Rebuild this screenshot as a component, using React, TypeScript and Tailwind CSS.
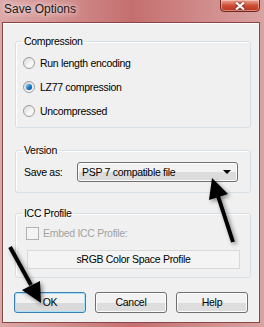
import React from 'react';

function Radio({ checked, label }: { checked?: boolean; label: string }) {
  return (
    <div className="h-[24px] flex items-center gap-[5px] pl-[7px]">
      <span className="relative w-[12px] h-[12px] rounded-full border border-[#9a9a9a] bg-gradient-to-br from-[#d6d6d6] via-[#f2f2f2] to-[#ffffff] flex items-center justify-center">
        {checked && (
          <span className="w-[6px] h-[6px] rounded-full bg-gradient-to-br from-[#9ad4f5] via-[#1f7fc7] to-[#0a4f91] shadow-[0_0_1px_#174f85]" />
        )}
      </span>
      <span className="leading-[13px]">{label}</span>
    </div>
  );
}

function Button({ label, focused }: { label: string; focused?: boolean }) {
  return (
    <div
      className={
        focused
          ? 'w-[72px] h-[21px] rounded-[3px] border border-[#3c7fb1] shadow-[inset_0_0_0_1px_#a8e2fa] bg-gradient-to-b from-[#f2f2f2] from-50% to-[#d9d9d9] to-50% flex items-center justify-center'
          : 'w-[72px] h-[21px] rounded-[3px] border border-[#707070] shadow-[inset_0_0_0_1px_#fcfcfc] bg-gradient-to-b from-[#f2f2f2] from-50% to-[#dddddd] to-50% flex items-center justify-center'
      }
    >
      <span className="leading-[13px]">{label}</span>
    </div>
  );
}

function Arrows() {
  return (
    <svg
      className="absolute inset-0 pointer-events-none drop-shadow-[2px_2px_2px_rgba(0,0,0,0.45)]"
      width="264"
      height="327"
      viewBox="0 0 264 327"
    >
      <line x1="233" y1="242" x2="218" y2="196" stroke="#000" strokeWidth="4" />
      <polygon points="212,178 228,194 209,200" fill="#000" />
      <line x1="10" y1="247" x2="31" y2="285" stroke="#000" strokeWidth="4" />
      <polygon points="41,303 40,281 22,290" fill="#000" />
    </svg>
  );
}

export default function App() {
  return (
    <div className="relative w-[264px] h-[327px] overflow-hidden bg-gradient-to-r from-[#dca8a8] via-[#c46f6f] to-[#d9a2a2] font-['Liberation_Sans',Arial,sans-serif] text-[10.5px] tracking-[-0.3px] text-black">
      {/* title bar */}
      <div className="h-[22px] flex items-start justify-between pl-[4px] pr-[4px]">
        <span className="text-[12px] tracking-normal leading-[19px] text-[#1c1c1c] [text-shadow:0_0_5px_#f6e4e4,0_0_8px_#f6e4e4]">
          Save Options
        </span>
        <div className="w-[40px] h-[13px] -mt-[1px] rounded-b-[4px] border border-[#6e2a22] bg-gradient-to-b from-[#e9a593] via-[#cf4e37] to-[#b8321f] shadow-[inset_0_0_0_1px_rgba(255,220,210,0.5)] flex items-center justify-center">
          <svg width="10" height="8" viewBox="0 0 10 8" className="drop-shadow-[0_0_1px_#5a1a12]">
            <path d="M1 0.5 L9 7.5 M9 0.5 L1 7.5" stroke="#fff" strokeWidth="2.2" />
          </svg>
        </div>
      </div>

      {/* window body */}
      <div className="ml-[2px] w-[258px] h-[301px] border border-[#8a4545] bg-[#f0f0f0] shadow-[inset_1px_1px_0_#ffffff] flex flex-col pl-[12px] pt-[12px]">
        <fieldset className="w-[236px] border border-[#d5dfe5] rounded-[3px] shadow-[inset_1px_1px_0_#fff] pb-[4px]">
          <legend className="ml-[6px] px-[2px] leading-[13px]">Compression</legend>
          <div className="flex flex-col pt-[3px]">
            <Radio label="Run length encoding" />
            <Radio label="LZ77 compression" checked />
            <Radio label="Uncompressed" />
          </div>
        </fieldset>

        <fieldset className="mt-[16px] w-[236px] border border-[#d5dfe5] rounded-[3px] shadow-[inset_1px_1px_0_#fff] pb-[10px]">
          <legend className="ml-[6px] px-[2px] leading-[13px]">Version</legend>
          <div className="flex items-center pt-[5px] pl-[8px]">
            <span className="w-[53px] leading-[13px]">Save as:</span>
            <div className="w-[161px] h-[20px] rounded-[3px] border border-[#707070] shadow-[inset_0_0_0_1px_#fcfcfc] bg-gradient-to-b from-[#f2f2f2] from-50% to-[#dcdcdc] to-50% flex items-center justify-between pl-[4px] pr-[6px]">
              <span className="leading-[13px]">PSP 7 compatible file</span>
              <span className="w-0 h-0 border-l-[4px] border-r-[4px] border-t-[4px] border-l-transparent border-r-transparent border-t-black" />
            </div>
          </div>
        </fieldset>

        <fieldset className="mt-[14px] w-[236px] border border-[#d5dfe5] rounded-[3px] shadow-[inset_1px_1px_0_#fff] pb-[8px]">
          <legend className="ml-[6px] px-[2px] leading-[13px]">ICC Profile</legend>
          <div className="flex flex-col pt-[7px] pl-[10px]">
            <div className="h-[13px] flex items-center gap-[4px]">
              <span className="w-[13px] h-[13px] border border-[#b1b1b1] bg-[#f4f4f4]" />
              <span className="leading-[13px] text-[#a3a3a3]">Embed ICC Profile:</span>
            </div>
            <div className="mt-[10px] ml-[1px] w-[213px] h-[19px] border border-[#d9d9d9] bg-[#f4f4f4] flex items-center justify-center">
              <span className="leading-[13px]">sRGB Color Space Profile</span>
            </div>
          </div>
        </fieldset>

        <div className="mt-[14px] -ml-[1px] flex gap-[9px]">
          <Button label="OK" focused />
          <Button label="Cancel" />
          <Button label="Help" />
        </div>
      </div>

      <Arrows />
    </div>
  );
}
